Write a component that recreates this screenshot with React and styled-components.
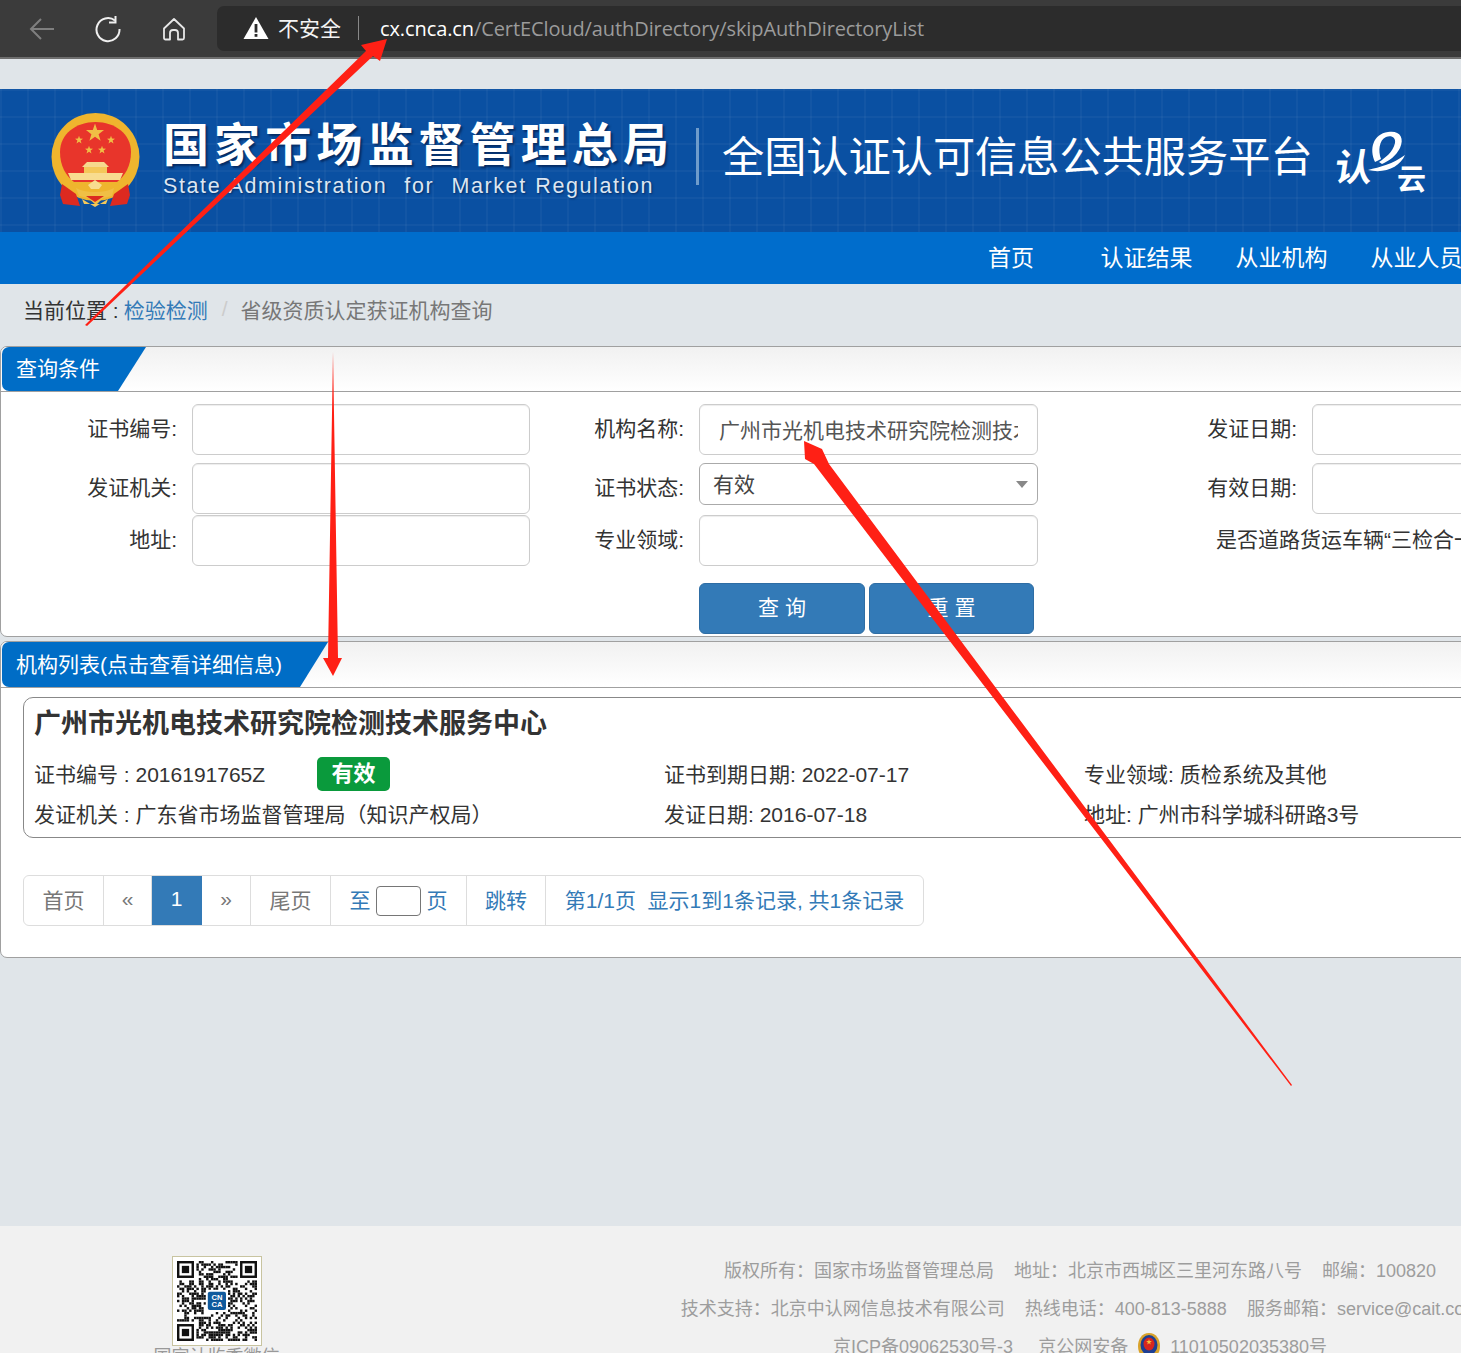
import React from 'react';
import styled, { createGlobalStyle } from 'styled-components';

const Global = createGlobalStyle`
  html, body { margin: 0; padding: 0; background: #e0e5e9; overflow: hidden; }
  * { box-sizing: border-box; }
`;
const FONT = `"Liberation Sans", "Noto Sans CJK SC", sans-serif`;

const Page = styled.div`
  position: relative; width: 1461px; height: 1353px; overflow: hidden;
  background: #e0e5e9; font-family: ${FONT}; color: #333; font-size: 21px;
`;
const Chrome = styled.div`
  height: 59px; background: #3b3b3b; border-bottom: 2px solid #6e6e6e;
  display: flex; align-items: flex-start; padding-top: 6px;
`;
const NavIcon = styled.div`
  width: 66px; height: 45px; display: flex; align-items: center; justify-content: center;
  &:first-child { margin-left: 9px; }
`;
const UrlBar = styled.div`
  margin-left: 10px; flex: 1; height: 45px; background: #2c2c2c; border-radius: 7px 0 0 7px;
  display: flex; align-items: center; padding: 0 0 2px 26px; color: #fff; white-space: nowrap;
`;
const Insecure = styled.span`
  font-size: 21px; margin: 0 0 2px 9px; color: #f4f4f4;
`;
const UrlSep = styled.span`
  width: 1px; height: 24px; background: #888; margin: 0 21px 0 17px;
`;
const Url = styled.span`
  font-family: "Open Sans", sans-serif; font-size: 20px; letter-spacing: -0.1px; color: #9b9b9b; margin-top: 2px;
  b { font-weight: 400; color: #fff; }
`;
const Banner = styled.div`
  margin-top: 30px; height: 143px; display: flex; align-items: flex-start;
  background-color: #0a50a2;
  background-image:
    linear-gradient(rgba(255,255,255,.035) 2px, transparent 2px),
    linear-gradient(90deg, rgba(255,255,255,.035) 2px, transparent 2px);
  background-size: 27px 27px;
  padding-left: 50px; color: #fff; white-space: nowrap;
`;
const Emblem = styled.svg`
  width: 92px; height: 98px; margin-top: 23px; flex: none;
`;
const Agency = styled.div`
  margin-left: 21px; margin-top: 27px; width: 533px; flex: none;
`;
const AgencyCn = styled.div`
  font-size: 46px; line-height: 58px; font-weight: 700; letter-spacing: 5.1px;
  text-shadow: 2px 2px 2px rgba(0,20,60,.6);
`;
const AgencyEn = styled.div`
  font-size: 21.5px; line-height: 26px; letter-spacing: 1.6px; word-spacing: 1px; color: #dce6f2; margin-top: -1px;
  text-shadow: 1px 1px 2px rgba(0,20,60,.6);
`;
const Divider = styled.div`
  width: 3px; height: 57px; background: #6f9ccb; margin-top: 39px; flex: none;
`;
const Platform = styled.div`
  margin-left: 23px; margin-top: 36px; font-size: 42.2px; line-height: 66px; flex: none; width: 613px;
`;
const Logo = styled.svg`
  width: 92px; height: 68px; margin-top: 40px; flex: none;
`;
const LogoChar = styled.text`
  font-family: "Noto Sans CJK SC", sans-serif; font-weight: 700; fill: #fff;
`;
const NavBar = styled.div`
  height: 52px; background: #006dcc; display: flex; align-items: center; padding: 0 0 4px 988px;
  color: #fff; font-size: 23px; white-space: nowrap; gap: 43px;
`;
const NavItem = styled.span`
  width: ${p => p.$w}px; flex: none;
`;
const Crumb = styled.div`
  height: 62px; padding: 0 0 12px 23px; display: flex; align-items: center; white-space: nowrap; font-size: 21px;
`;
const CrumbLink = styled.span` color: #337ab7; margin-left: 5px; `;
const CrumbSep = styled.span` color: #ccc; margin: 0 13px 0 14px; `;
const CrumbNow = styled.span` color: #777; `;
const Panel = styled.div`
  width: 1600px; height: ${p => p.$h}px; margin-bottom: 4px; background: #fff;
  border: 1px solid #a0a0a0; border-radius: 7px; overflow: hidden;
`;
const PanelHead = styled.div`
  height: ${p => p.$h}px; border-bottom: 1px solid #a0a0a0; padding-left: 1px;
  background: linear-gradient(#f1f1f1, #fff);
`;
const PanelTab = styled.div`
  width: ${p => p.$w}px; height: 100%; background: #006dc6; color: #fff; border-radius: 7px 0 0 7px;
  font-size: 21px; line-height: ${p => p.$lh}px; padding-left: 14px; white-space: nowrap;
  clip-path: polygon(0 0, 100% 0, calc(100% - 28px) 100%, 0 100%);
`;
const Form = styled.div` padding-top: 12px; `;
const Row = styled.div`
  display: flex; align-items: flex-start; height: ${p => p.$h}px; white-space: nowrap;
`;
const Label = styled.div`
  width: ${p => p.$w}px; flex: none; text-align: right; line-height: 50px; margin-right: 15px; font-size: 21px;
`;
const LongLabel = styled.div`
  flex: none; padding-left: 178px; line-height: 50px; font-size: 21px;
`;
const TextInput = styled.input`
  display: block; width: ${p => p.$w}px; height: 51px; flex: none; border: 1px solid #ccc; border-radius: 6px;
  background: #fff; box-shadow: inset 0 1px 1px rgba(0,0,0,.075); padding: 0 19px 2px;
  font: 21px ${FONT}; color: #555; outline: none;
`;
const SelectWrap = styled.div`
  position: relative; width: 339px; height: 42px; flex: none;
  &::after {
    content: ""; position: absolute; right: 10px; top: 18px;
    border-left: 6px solid transparent; border-right: 6px solid transparent; border-top: 7px solid #888;
  }
`;
const Select = styled.select`
  appearance: none; width: 100%; height: 100%; border: 1px solid #aaa; border-radius: 6px; background: #fff;
  padding: 0 13px; font: 21px ${FONT}; color: #444; outline: none;
`;
const Buttons = styled.div`
  display: flex; gap: 4px; padding-left: 698px; margin-top: 17px;
`;
const Btn = styled.div`
  width: ${p => p.$w}px; height: 51px; background: #337ab7; border: 1px solid #2e6da4; border-radius: 6px;
  color: #fff; text-align: center; line-height: 47px; font-size: 21px; white-space: pre;
`;
const Card = styled.div`
  margin: 9px 0 0 22px; height: 141px; border: 1px solid #888; border-radius: 10px; padding: 0 10px 0 11px; white-space: nowrap;
`;
const CardTitle = styled.div`
  font-size: 27px; font-weight: 700; line-height: 52px; color: #333; margin: 0 0 3px -1px;
`;
const CardRow = styled.div`
  display: flex; align-items: center; height: 40px; font-size: 21px; margin-left: -1px;
`;
const CardCell = styled.div` width: ${p => p.$w}px; flex: none; display: flex; align-items: center; `;
const Badge = styled.span`
  margin: 1px 0 0 52px; width: 73px; height: 34px; background: #0a9a3c; border-radius: 5px; color: #fff;
  font-size: 22px; font-weight: 700; line-height: 34px; text-align: center;
`;
const Pager = styled.div`
  display: inline-flex; height: 51px; margin: 37px 0 0 22px; border: 1px solid #ddd; border-radius: 6px;
  white-space: nowrap; font-size: 21px; overflow: hidden;
`;
const PagerCell = styled.div`
  width: ${p => p.$w}px; height: 100%; flex: none; display: flex; align-items: center; justify-content: center;
  padding-bottom: 3px;
  border-right: ${p => p.$last ? 'none' : '1px solid #ddd'};
  color: ${p => p.$blue ? '#337ab7' : '#777'};
  ${p => p.$active ? 'background:#337ab7;color:#fff;border-color:#337ab7;' : ''}
`;
const PagerInput = styled.input`
  width: 45px; height: 30px; margin: 0 6px -3px 5px; border: 1px solid #767676; border-radius: 4px; background: #fff; outline: none;
`;
const Footer = styled.div`
  margin-top: 268px; height: 127px; background: #f1f1f1; padding-left: 153px; display: flex; align-items: flex-start;
  color: #999; white-space: nowrap; font-size: 18px;
`;
const QrCol = styled.div`
  width: 127px; flex: none; padding-top: 30px; display: flex; flex-direction: column; align-items: center;
`;
const QrBox = styled.div`
  width: 90px; height: 90px; background: #fff; border: 1px solid #c8c4a0; display: flex; align-items: center; justify-content: center;
`;
const QrText = styled.div` margin-top: -1px; line-height: 24px; `;
const FootText = styled.div`
  width: 800px; flex: none; margin-left: 400px; padding-top: 26px; text-align: center; line-height: 38px; color: #9d9d9d;
`;
const FootLine = styled.div`
  display: flex; justify-content: center; gap: 20px; height: 38px;
`;
const Icp = styled.span` margin-right: 5px; `;
const Police = styled.svg`
  width: 26px; height: 30px; margin: 4px -12px 0; flex: none;
`;
const Overlay = styled.svg`
  position: absolute; left: 0; top: 0; width: 1461px; height: 1353px; pointer-events: none;
`;

function Qr() {
  const n = 33, m = 2.4;
  const cells = [];
  let s = 12345;
  const inFinder = (x, y) => (x < 8 && y < 8) || (x > n - 9 && y < 8) || (x < 8 && y > n - 9);
  for (let y = 0; y < n; y++) for (let x = 0; x < n; x++) {
    s = (s * 1103515245 + 12345) & 0x7fffffff;
    if (inFinder(x, y)) continue;
    if (((s >> 16) & 3) < 2) cells.push(<rect key={x + '-' + y} x={x * m} y={y * m} width={m} height={m} fill="#111" />);
  }
  const finder = (fx, fy) => (
    <g key={fx + '_' + fy}>
      <rect x={fx * m + m / 2} y={fy * m + m / 2} width={6 * m} height={6 * m} fill="none" stroke="#111" strokeWidth={m} />
      <rect x={(fx + 2) * m} y={(fy + 2) * m} width={3 * m} height={3 * m} fill="#111" />
    </g>
  );
  return (
    <svg width="80" height="80" viewBox="0 0 79.2 79.2">
      {cells}
      {finder(0, 0)}{finder(n - 7, 0)}{finder(0, n - 7)}
      <rect x="28.5" y="28.5" width="22" height="22" fill="#fff" />
      <rect x="30.5" y="30.5" width="18" height="18" rx="2" fill="#0f5a9c" />
      <text x="39.5" y="38.5" fontSize="7.5" fontWeight="700" fill="#fff" textAnchor="middle" fontFamily="Liberation Sans">CN</text>
      <text x="39.5" y="46" fontSize="7.5" fontWeight="700" fill="#fff" textAnchor="middle" fontFamily="Liberation Sans">CA</text>
    </svg>
  );
}

const star = (cx, cy, r, rot = 0) => {
  const pts = [];
  for (let i = 0; i < 10; i++) {
    const a = -Math.PI / 2 + rot + (i * Math.PI) / 5;
    const rr = i % 2 ? r * 0.4 : r;
    pts.push(`${(cx + rr * Math.cos(a)).toFixed(1)},${(cy + rr * Math.sin(a)).toFixed(1)}`);
  }
  return pts.join(' ');
};

function NationalEmblem() {
  return (
    <Emblem viewBox="0 0 92 98">
      <ellipse cx="45.5" cy="45" rx="44" ry="44" fill="#efb52e" />
      <path d="M10 40C10 22 26 10 45.5 10S81 22 81 40c0 14-6 24-14 30H24C16 64 10 54 10 40z" fill="#e8352b" />
      <polygon points={star(45, 21, 9.5)} fill="#f0bf45" />
      <polygon points={star(29, 28, 4.2)} fill="#f0bf45" />
      <polygon points={star(61, 28, 4.2)} fill="#f0bf45" />
      <polygon points={star(39, 38, 4.2)} fill="#f0bf45" />
      <polygon points={star(52, 38, 4.2)} fill="#f0bf45" />
      <path d="M37 50h17l5 5H32z" fill="#f6d98e" />
      <path d="M34 55h23v6H34z" fill="#f4c85a" />
      <path d="M18 61h55l-3 7H21z" fill="#f8dc90" />
      <path d="M12 72l14 10 4 12-17-2-3-9z" fill="#dc2a20" />
      <path d="M78 72 64 82l-4 12 17-2 3-9z" fill="#dc2a20" />
      <path d="M19 68c8 4 16 6 26.5 6S64 72 72 68l-6 8c-6 3-12 4-20.5 4S31 79 25 76z" fill="#efb52e" />
      <path d="M26 76c6 3 12 4 19 4s13-1 19-4l-2 8-9 2-7 7-8-7-9-2z" fill="#f0bf45" />
      <path d="M38 73l7-5 7 5-3 4h-8z" fill="#f8dc90" />
      <path d="M32 87l13 8 13-8-2 5H34z" fill="#f4c85a" />
      <path d="M36 84h18l-9 6z" fill="#dc2a20" />
    </Emblem>
  );
}

export default function App() {
  return (
    <Page>
      <Global />
      <Chrome>
        <NavIcon>
          <svg width="28" height="24" viewBox="0 0 28 24" fill="none" stroke="#7f7f7f" strokeWidth="2"><path d="M26 12H3M13 2 3 12l10 10" /></svg>
        </NavIcon>
        <NavIcon>
          <svg width="28" height="28" viewBox="0 0 28 28" fill="none" stroke="#f0f0f0" strokeWidth="2"><path d="M21 5.5A11.5 11.5 0 1 0 25.5 14" /><path d="M21.5 1v6.5H15" /></svg>
        </NavIcon>
        <NavIcon>
          <svg width="24" height="24" viewBox="0 0 24 24" fill="none" stroke="#e8e8e8" strokeWidth="1.8" strokeLinejoin="round"><path d="M2 11.5 12 2l10 9.5V21a1.5 1.5 0 0 1-1.5 1.5H16V16a3 3 0 0 0-3-3h-2a3 3 0 0 0-3 3v6.5H3.5A1.5 1.5 0 0 1 2 21z" /></svg>
        </NavIcon>
        <UrlBar>
          <svg width="26" height="24" viewBox="0 0 26 24"><path d="M13 1 25.5 23H.5z" fill="#fff" /><rect x="11.6" y="8" width="2.8" height="8.5" fill="#2c2c2c" /><rect x="11.6" y="18" width="2.8" height="2.8" fill="#2c2c2c" /></svg>
          <Insecure>不安全</Insecure>
          <UrlSep />
          <Url><b>cx.cnca.cn</b>/CertECloud/authDirectory/skipAuthDirectoryList</Url>
        </UrlBar>
      </Chrome>

      <Banner>
        <NationalEmblem />
        <Agency>
          <AgencyCn>国家市场监督管理总局</AgencyCn>
          <AgencyEn>State Administration&nbsp; for&nbsp; Market Regulation</AgencyEn>
        </Agency>
        <Divider />
        <Platform>全国认证认可信息公共服务平台</Platform>
        <Logo viewBox="0 0 92 68">
          <g transform="translate(0 52) skewX(-8)"><LogoChar x="-2" y="0" fontSize="38">认</LogoChar></g>
          <path d="M40 33C34 20 38 5 53 3 64 1 70 8 65 19 61 27 54 32 47 35l-3-2C50 29 58 23 60 14 61 8 56 6 51 8 44 11 43 22 46 30z" fill="#fff" />
          <path d="M33 41C45 38 58 35 70 26 65 38 50 45 33 41z" fill="#fff" />
          <LogoChar x="62" y="61" fontSize="29">云</LogoChar>
        </Logo>
      </Banner>

      <NavBar>
        <NavItem $w={69.5}>首页</NavItem>
        <NavItem $w={92}>认证结果</NavItem>
        <NavItem $w={92}>从业机构</NavItem>
        <NavItem $w={92}>从业人员</NavItem>
      </NavBar>

      <Crumb>
        当前位置 :<CrumbLink>检验检测</CrumbLink><CrumbSep>/</CrumbSep><CrumbNow>省级资质认定获证机构查询</CrumbNow>
      </Crumb>

      <Panel $h={291}>
        <PanelHead $h={45}><PanelTab $w={144} $lh={44}>查询条件</PanelTab></PanelHead>
        <Form>
          <Row $h={59}>
            <Label $w={176}>证书编号:</Label><TextInput $w={338} />
            <Label $w={154}>机构名称:</Label><TextInput $w={339} readOnly value="广州市光机电技术研究院检测技术服务中心" />
            <Label $w={259}>发证日期:</Label><TextInput $w={300} />
          </Row>
          <Row $h={52}>
            <Label $w={176}>发证机关:</Label><TextInput $w={338} />
            <Label $w={154}>证书状态:</Label>
            <SelectWrap><Select defaultValue="有效"><option>有效</option></Select></SelectWrap>
            <Label $w={259}>有效日期:</Label><TextInput $w={300} />
          </Row>
          <Row $h={51}>
            <Label $w={176}>地址:</Label><TextInput $w={338} />
            <Label $w={154}>专业领域:</Label><TextInput $w={339} />
            <LongLabel>是否道路货运车辆“三检合一”:</LongLabel>
          </Row>
          <Buttons>
            <Btn $w={166}>查 询</Btn>
            <Btn $w={165}>重 置</Btn>
          </Buttons>
        </Form>
      </Panel>

      <Panel $h={317}>
        <PanelHead $h={46}><PanelTab $w={326} $lh={46}>机构列表(点击查看详细信息)</PanelTab></PanelHead>
        <Card>
          <CardTitle>广州市光机电技术研究院检测技术服务中心</CardTitle>
          <CardRow>
            <CardCell $w={630}>证书编号 : 2016191765Z<Badge>有效</Badge></CardCell>
            <CardCell $w={420}>证书到期日期: 2022-07-17</CardCell>
            <CardCell $w={400}>专业领域: 质检系统及其他</CardCell>
          </CardRow>
          <CardRow>
            <CardCell $w={630}>发证机关 : 广东省市场监督管理局（知识产权局）</CardCell>
            <CardCell $w={420}>发证日期: 2016-07-18</CardCell>
            <CardCell $w={400}>地址: 广州市科学城科研路3号</CardCell>
          </CardRow>
        </Card>
        <Pager>
          <PagerCell $w={80}>首页</PagerCell>
          <PagerCell $w={48}>«</PagerCell>
          <PagerCell $w={50} $active>1</PagerCell>
          <PagerCell $w={49}>»</PagerCell>
          <PagerCell $w={80}>尾页</PagerCell>
          <PagerCell $w={136} $blue>至<PagerInput />页</PagerCell>
          <PagerCell $w={79} $blue>跳转</PagerCell>
          <PagerCell $w={377} $blue $last>第1/1页&nbsp;&nbsp;显示1到1条记录, 共1条记录</PagerCell>
        </Pager>
      </Panel>

      <Footer>
        <QrCol>
          <QrBox><Qr /></QrBox>
          <QrText>国家认监委微信</QrText>
        </QrCol>
        <FootText>
          <FootLine>
            <span>版权所有：国家市场监督管理总局</span><span>地址：北京市西城区三里河东路八号</span><span>邮编：100820</span>
          </FootLine>
          <FootLine>
            <span>技术支持：北京中认网信息技术有限公司</span><span>热线电话：400-813-5888</span><span>服务邮箱：service@cait.com</span>
          </FootLine>
          <FootLine>
            <Icp>京ICP备09062530号-3</Icp>
            <span>京公网安备</span>
            <Police viewBox="0 0 26 30">
              <path d="M13 1c7 0 11 6 11 13s-4 13-11 13S2 21 2 14 6 1 13 1z" fill="#d9a32c" />
              <ellipse cx="13" cy="13" rx="8.5" ry="10" fill="#1d3f93" />
              <ellipse cx="13" cy="12" rx="5.5" ry="6.5" fill="#d8261f" />
              <polygon points={star(13, 10, 3)} fill="#f2c13a" />
              <path d="M5 24c4 3 12 3 16 0l2 5H3z" fill="#e8b040" />
            </Police>
            <span>11010502035380号</span>
          </FootLine>
        </FootText>
      </Footer>

      <Overlay viewBox="0 0 1461 1353">
        <polygon points="85,325 366,51 361,45 387,39 380,61 373,56 87,326" fill="#ff2015" />
        <polygon points="333,352 338,658 342,658 333,676 323,658 328,658" fill="#ff2015" />
        <polygon points="1292,1085 829,464 822,449 804,441 805,459 814,464 1291,1086" fill="#ff2015" />
      </Overlay>
    </Page>
  );
}
